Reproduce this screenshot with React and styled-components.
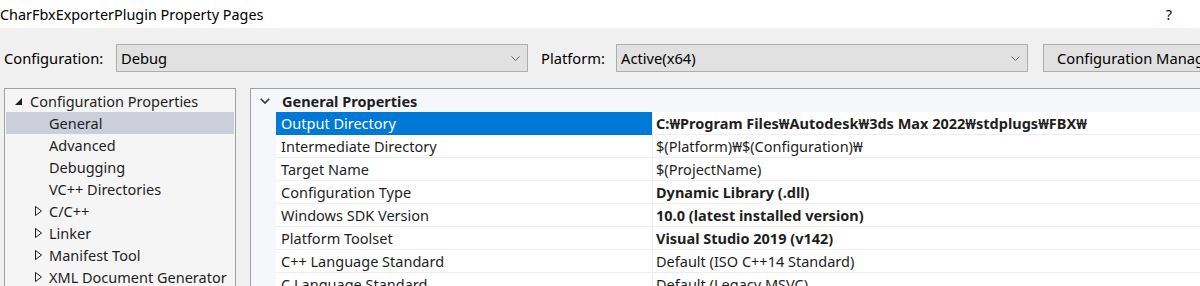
import React from "react";
import styled, { createGlobalStyle, css } from "styled-components";

const font = `"Noto Sans", "DejaVu Sans", "Noto Sans CJK KR", sans-serif`;

const GlobalStyle = createGlobalStyle`
  html, body {
    margin: 0;
    padding: 0;
    background: #f0f0f0;
    overflow: hidden;
  }
  body {
    font-family: ${font};
    font-size: 14.5px;
    color: #1e1e1e;
  }
`;

const Window = styled.div`
  width: 1200px;
  height: 286px;
  overflow: hidden;
  background: #f0f0f0;
`;

const TitleBar = styled.div`
  height: 28px;
  background: #ffffff;
  display: flex;
  align-items: center;
  justify-content: space-between;
  padding-right: 28px;
  font-size: 14.4px;
  color: #000;
`;

const Toolbar = styled.div`
  display: flex;
  align-items: center;
  padding: 16px 0 16px 4px;
  height: 28px;
`;

const Label = styled.span`
  width: ${props => props.width}px;
  flex: none;
  font-size: 14.7px;
  color: #000;
`;

const Select = styled.div`
  width: ${props => props.width}px;
  height: 28px;
  box-sizing: border-box;
  flex: none;
  background: #e1e1e1;
  border: 1px solid #adadad;
  display: flex;
  align-items: center;
  justify-content: space-between;
  padding: 0 7px 0 4px;
  margin-right: ${props => props.gap}px;
  font-size: 14.7px;
  color: #000;
`;

const Button = styled.div`
  width: 180px;
  height: 28px;
  box-sizing: border-box;
  flex: none;
  background: #e1e1e1;
  border: 1px solid #adadad;
  display: flex;
  align-items: center;
  padding-left: 13px;
  font-size: 14.7px;
  color: #000;
  white-space: nowrap;
  overflow: hidden;
`;

const Body = styled.div`
  display: flex;
  gap: 14px;
  padding-left: 4px;
`;

const Tree = styled.div`
  width: 232px;
  height: 220px;
  flex: none;
  box-sizing: border-box;
  background: #f5f5f5;
  border: 1px solid #a0a0a0;
  padding: 1px 1px 0;
`;

const TreeRow = styled.div`
  height: 22px;
  display: flex;
  align-items: center;
  padding-left: ${props => props.indent}px;
  white-space: nowrap;
  ${props =>
    props.selected &&
    css`
      background: #cccedb;
    `}
`;

const Toggle = styled.span`
  width: ${props => props.width}px;
  flex: none;
  display: flex;
  align-items: center;
`;

const Grid = styled.div`
  flex: 1;
  height: 220px;
  box-sizing: border-box;
  background: #ffffff;
  border: 1px solid #a0a0a0;
  border-right: none;
  overflow: hidden;
`;

const GroupHeader = styled.div`
  height: 23px;
  display: flex;
  align-items: center;
  background: #f5f7fb;
  font-weight: bold;
`;

const GroupToggle = styled.span`
  width: 31px;
  box-sizing: border-box;
  flex: none;
  display: flex;
  align-items: center;
  padding-left: 9px;
  margin-top: 1px;
`;

const PropRow = styled.div`
  display: grid;
  grid-template-columns: 25px 376px 1fr;
  height: 23px;
`;

const Margin = styled.div`
  background: #f5f7fb;
`;

const NameCell = styled.div`
  display: flex;
  align-items: center;
  padding-left: 5px;
  border-bottom: 1px solid #ededf2;
  white-space: nowrap;
  ${props =>
    props.selected &&
    css`
      background: #0078d7;
      color: #ffffff;
      border-bottom-color: #0078d7;
    `}
`;

const ValueCell = styled.div`
  display: flex;
  align-items: center;
  padding-left: 3px;
  border-left: 1px solid #ededf2;
  border-bottom: 1px solid #ededf2;
  white-space: pre;
  font-weight: ${props => (props.bold ? "bold" : "normal")};
`;

const DropArrow = () => (
  <svg width="9" height="5" viewBox="0 0 9 5">
    <polyline points="0.5,0.5 4.5,4.5 8.5,0.5" fill="none" stroke="#606060" strokeWidth="1" />
  </svg>
);

const Expanded = () => (
  <svg width="7" height="7" viewBox="0 0 7 7">
    <polygon points="7,0 7,7 0,7" fill="#1e1e1e" />
  </svg>
);

const Collapsed = () => (
  <svg width="7" height="10" viewBox="0 0 7 10">
    <polygon points="0.5,0.5 6.5,5 0.5,9.5" fill="none" stroke="#1e1e1e" strokeWidth="1" />
  </svg>
);

const Chevron = () => (
  <svg width="10" height="6" viewBox="0 0 10 6">
    <polyline points="0.7,0.7 5,5 9.3,0.7" fill="none" stroke="#333" strokeWidth="1.6" />
  </svg>
);

const treeItems = [
  { label: "Configuration Properties", level: 0, state: "open" },
  { label: "General", level: 1, selected: true },
  { label: "Advanced", level: 1 },
  { label: "Debugging", level: 1 },
  { label: "VC++ Directories", level: 1 },
  { label: "C/C++", level: 1, state: "closed" },
  { label: "Linker", level: 1, state: "closed" },
  { label: "Manifest Tool", level: 1, state: "closed" },
  { label: "XML Document Generator", level: 1, state: "closed" },
];

const props = [
  { name: "Output Directory", value: "C:₩Program Files₩Autodesk₩3ds Max 2022₩stdplugs₩FBX₩", bold: true, selected: true },
  { name: "Intermediate Directory", value: "$(Platform)₩$(Configuration)₩" },
  { name: "Target Name", value: "$(ProjectName)" },
  { name: "Configuration Type", value: "Dynamic Library (.dll)", bold: true },
  { name: "Windows SDK Version", value: "10.0 (latest installed version)", bold: true },
  { name: "Platform Toolset", value: "Visual Studio 2019 (v142)", bold: true },
  { name: "C++ Language Standard", value: "Default (ISO C++14 Standard)" },
  { name: "C Language Standard", value: "Default (Legacy MSVC)" },
];

export default function App() {
  return (
    <Window>
      <GlobalStyle />
      <TitleBar>
        <span>CharFbxExporterPlugin Property Pages</span>
        <span>?</span>
      </TitleBar>
      <Toolbar>
        <Label width={112}>Configuration:</Label>
        <Select width={412} gap={13}>
          <span>Debug</span>
          <DropArrow />
        </Select>
        <Label width={75}>Platform:</Label>
        <Select width={412} gap={15}>
          <span>Active(x64)</span>
          <DropArrow />
        </Select>
        <Button>Configuration Manager...</Button>
      </Toolbar>
      <Body>
        <Tree>
          {treeItems.map(item => (
            <TreeRow key={item.label} indent={item.level === 0 ? 9 : 29} selected={item.selected}>
              <Toggle width={item.level === 0 ? 15 : 14}>
                {item.state === "open" && <Expanded />}
                {item.state === "closed" && <Collapsed />}
              </Toggle>
              {item.label}
            </TreeRow>
          ))}
        </Tree>
        <Grid>
          <GroupHeader>
            <GroupToggle>
              <Chevron />
            </GroupToggle>
            General Properties
          </GroupHeader>
          {props.map(p => (
            <PropRow key={p.name}>
              <Margin />
              <NameCell selected={p.selected}>{p.name}</NameCell>
              <ValueCell bold={p.bold}>{p.value}</ValueCell>
            </PropRow>
          ))}
        </Grid>
      </Body>
    </Window>
  );
}
